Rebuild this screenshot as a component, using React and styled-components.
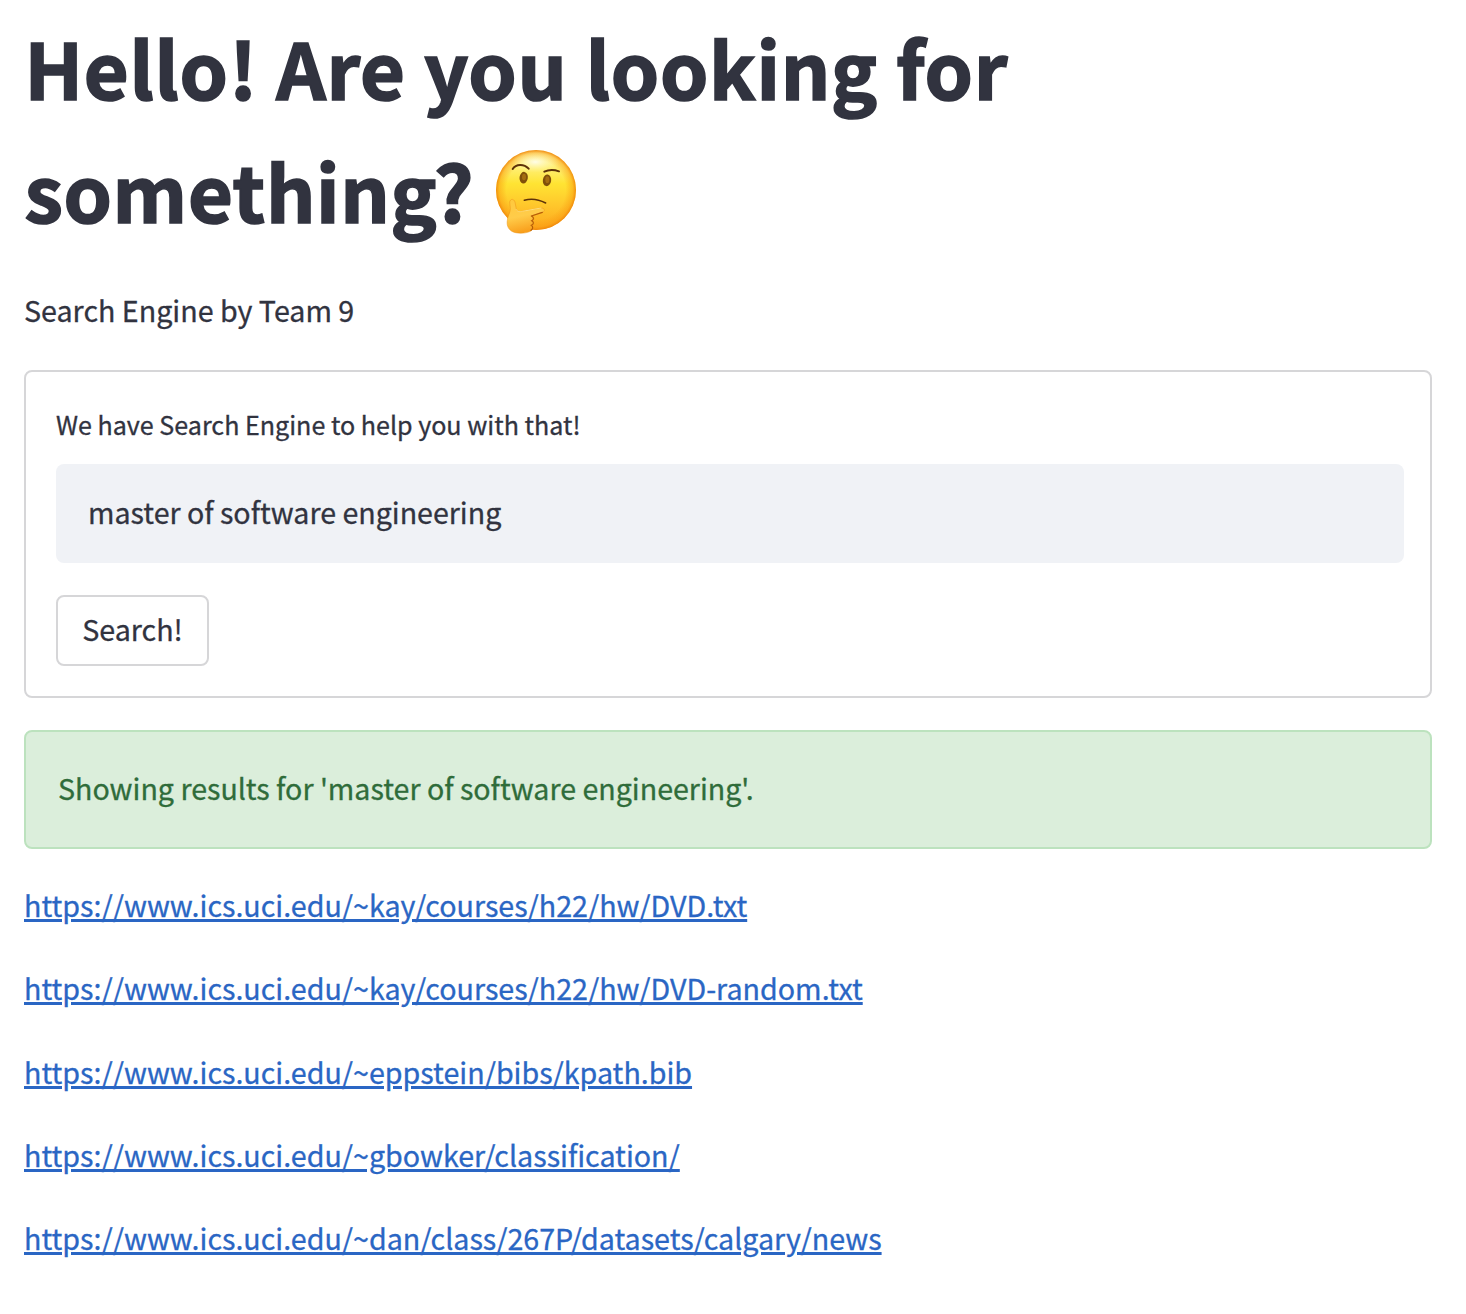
import React from "react";
import styled, { createGlobalStyle } from "styled-components";

const Global = createGlobalStyle`
  * { box-sizing: border-box; }
  body {
    margin: 0;
    background: #fff;
    color: #31333f;
    font-family: "Noto Sans CJK SC", "Noto Sans", sans-serif;
    font-size: 28.65px;
    line-height: 51.2px;
    -webkit-text-stroke: 0.3px currentColor;
  }
`;

const Page = styled.main`
  display: flex;
  flex-direction: column;
  padding: 5px 34px 24px 24px;
`;

const Title = styled.h1`
  margin: 0;
  padding-left: 0.5px;
  font-size: 77.4px;
  letter-spacing: 0.68px;
  line-height: 123px;
  font-weight: 700;
  -webkit-text-stroke: 1.7px currentColor;
`;

const Emoji = styled.svg`
  width: 82px;
  height: 85px;
  vertical-align: -11px;
  margin-left: 2.5px;
`;

const Intro = styled.p`
  margin: 33px 0 34.8px;
`;

const SearchForm = styled.form`
  display: flex;
  flex-direction: column;
  align-items: flex-start;
  height: 328px;
  padding: 30px 26px 30px 30px;
  border: 2px solid #d6d6d8;
  border-radius: 8px;
`;

const Label = styled.label`
  margin-bottom: 18px;
  font-size: 25.08px;
  line-height: 44px;
`;

const QueryInput = styled.input`
  width: 100%;
  height: 99px;
  padding: 0 32px 4px;
  border: 0;
  border-radius: 8px;
  outline: 0;
  background: #f0f2f6;
  color: inherit;
  font: inherit;
  font-size: 28.58px;
  -webkit-text-stroke: inherit;
`;

const SearchButton = styled.button`
  width: 153px;
  height: 71px;
  margin-top: 32px;
  padding: 0 0 4px;
  border: 2px solid #d6d6d8;
  border-radius: 8px;
  background: #fff;
  color: inherit;
  font: inherit;
  -webkit-text-stroke: inherit;
`;

const Alert = styled.div`
  display: flex;
  align-items: center;
  height: 119px;
  margin-top: 32px;
  padding: 0 32px 4px;
  border: 2px solid #bce2be;
  border-radius: 8px;
  background: #dbeedb;
  color: #2f6c3a;
  font-size: 28.6px;
`;

const Results = styled.div`
  display: flex;
  flex-direction: column;
  align-items: flex-start;
  gap: 32px;
  margin-top: 30.2px;
`;

const ResultLink = styled.a`
  color: #2a66c4;
  text-decoration: underline;
  text-decoration-thickness: 3px;
  text-underline-offset: 2px;
`;

const urls = [
  "https://www.ics.uci.edu/~kay/courses/h22/hw/DVD.txt",
  "https://www.ics.uci.edu/~kay/courses/h22/hw/DVD-random.txt",
  "https://www.ics.uci.edu/~eppstein/bibs/kpath.bib",
  "https://www.ics.uci.edu/~gbowker/classification/",
  "https://www.ics.uci.edu/~dan/class/267P/datasets/calgary/news",
];

function ThinkingFace() {
  return (
    <Emoji viewBox="45 25 246 255" role="img" aria-label="thinking face">
      <defs>
        <linearGradient id="skin" x1="0" y1="0" x2="0" y2="1">
          <stop offset="0" stopColor="#fff3a0" />
          <stop offset="0.2" stopColor="#fff07a" />
          <stop offset="0.42" stopColor="#ffe433" />
          <stop offset="0.7" stopColor="#ffc62b" />
          <stop offset="1" stopColor="#fda61c" />
        </linearGradient>
        <radialGradient id="rim" cx="0.5" cy="0.5" r="0.5">
          <stop offset="0.74" stopColor="#f99a10" stopOpacity="0" />
          <stop offset="0.92" stopColor="#f99a10" stopOpacity="0.5" />
          <stop offset="1" stopColor="#ee8208" stopOpacity="0.9" />
        </radialGradient>
        <radialGradient id="shine" cx="0.5" cy="0.5" r="0.5">
          <stop offset="0" stopColor="#fffef2" stopOpacity="0.9" />
          <stop offset="1" stopColor="#fff7a0" stopOpacity="0" />
        </radialGradient>
        <linearGradient id="hand" x1="0" y1="0" x2="0.25" y2="1">
          <stop offset="0" stopColor="#ffc83c" />
          <stop offset="0.55" stopColor="#ffcc4a" />
          <stop offset="1" stopColor="#f9a01d" />
        </linearGradient>
      </defs>
      <circle cx="168" cy="148" r="120" fill="url(#skin)" />
      <circle cx="168" cy="148" r="120" fill="url(#rim)" />
      <ellipse cx="166" cy="64" rx="72" ry="32" fill="url(#shine)" />
      <ellipse cx="131" cy="111" rx="12.5" ry="17.5" transform="rotate(8 131 111)" fill="#80500a" />
      <ellipse cx="201" cy="119" rx="12.5" ry="17.5" transform="rotate(8 201 119)" fill="#80500a" />
      <ellipse cx="132" cy="109" rx="6" ry="10" fill="#a56d10" />
      <ellipse cx="202" cy="117" rx="6" ry="10" fill="#a56d10" />
      <g fill="none" stroke="#5d3209" strokeLinecap="round">
        <path d="M98 85 C108 69 132 69 146 84" strokeWidth="6" />
        <path d="M193 93 C206 87 222 87 237 92" strokeWidth="6" />
        <path d="M133 179 C154 172 178 177 197 187" strokeWidth="4.5" />
      </g>
      <path
        d="M89 184 C91 174 101 173 105 184 L109 206 C113 213 119 214 126 212 L181 202 C193 200 198 211 187 215 L154 226 C163 229 163 236 158 240 C163 245 162 251 157 254 C161 262 157 268 151 272 C137 279 107 280 94 271 C83 263 80 252 82 239 C83 226 91 216 91 204 Z"
        fill="url(#hand)"
        stroke="#ed9214"
        strokeWidth="1.5"
      />
      <path d="M109 207 C113 214 121 214 127 212 L183 202" fill="none" stroke="#ffdf7b" strokeWidth="3" strokeLinecap="round" />
      <path d="M187 215 L154 226 M155 227 C162 230 162 236 155 240 C162 244 162 250 154 254 C160 258 159 265 153 269" fill="none" stroke="#b65d08" strokeWidth="3.5" strokeLinecap="round" />
    </Emoji>
  );
}

export default function App() {
  return (
    <Page>
      <Global />
      <Title>
        Hello! Are you looking for
        <br />
        something? <ThinkingFace />
      </Title>
      <Intro>Search Engine by Team 9</Intro>
      <SearchForm onSubmit={(e) => e.preventDefault()}>
        <Label htmlFor="query">We have Search Engine to help you with that!</Label>
        <QueryInput id="query" defaultValue="master of software engineering" />
        <SearchButton type="submit">Search!</SearchButton>
      </SearchForm>
      <Alert role="status">Showing results for 'master of software engineering'.</Alert>
      <Results>
        {urls.map((url) => (
          <ResultLink key={url} href={url}>{url}</ResultLink>
        ))}
      </Results>
    </Page>
  );
}
